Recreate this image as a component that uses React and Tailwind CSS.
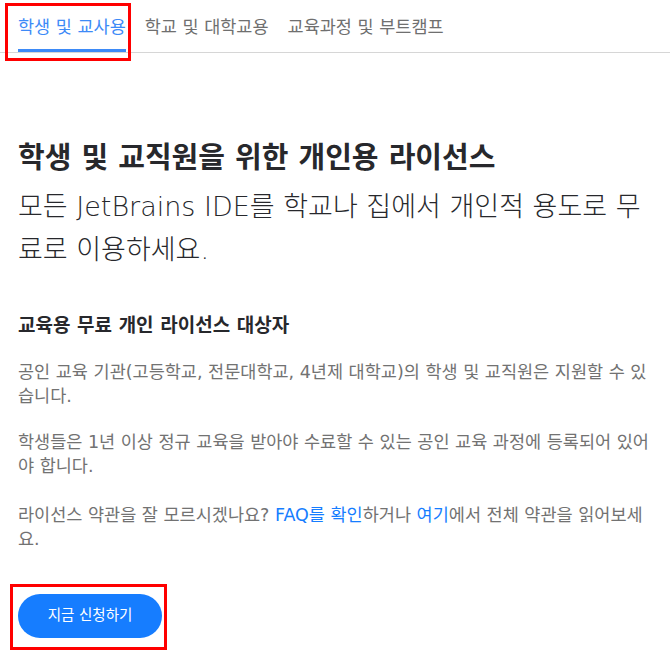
import { useState } from 'react'

const tabs = ['학생 및 교사용', '학교 및 대학교용', '교육과정 및 부트캠프']

function App() {
  const [active, setActive] = useState(0)

  return (
    <div className="relative w-[670px] min-h-[668px] bg-white font-['DejaVu_Sans','Noto_Sans_CJK_KR',sans-serif] text-[#27282c]">
      {/* Tabs */}
      <nav className="flex h-[53px] gap-[19px] border-b border-[#d6d6d6] pl-[18px]">
        {tabs.map((tab, i) => (
          <button
            key={tab}
            onClick={() => setActive(i)}
            className={
              i === active
                ? 'flex items-center border-b-[3px] border-[#3d8af7] pt-[5px] text-[17.5px] text-[#3d8af7]'
                : 'flex items-center border-b-[3px] border-transparent pt-[5px] text-[17.5px] text-[#6f6f6f]'
            }
          >
            {tab}
          </button>
        ))}
      </nav>

      <main className="pl-[18px] pr-[12px] pt-[88px]">
        <h1 className="text-[29px] font-bold leading-[34px]">학생 및 교직원을 위한 개인용 라이선스</h1>
        <p className="mt-[10px] text-[27px] font-light leading-[43px]">
          모든 JetBrains IDE를 학교나 집에서 개인적 용도로 무료로 이용하세요.
        </p>

        <h2 className="mt-[42px] text-[19px] font-bold leading-[24px]">교육용 무료 개인 라이선스 대상자</h2>
        <p className="mt-[23px] text-[17.5px] leading-[24px] text-[#727272]">
          공인 교육 기관(고등학교, 전문대학교, 4년제 대학교)의 학생 및 교직원은 지원할 수 있습니다.
        </p>
        <p className="mt-[22px] text-[17.5px] leading-[24px] text-[#727272]">
          학생들은 1년 이상 정규 교육을 받아야 수료할 수 있는 공인 교육 과정에 등록되어 있어야 합니다.
        </p>
        <p className="mt-[25px] text-[17.5px] leading-[24px] text-[#727272]">
          라이선스 약관을 잘 모르시겠나요? <a className="text-[#167dff]">FAQ를 확인</a>하거나{' '}
          <a className="text-[#167dff]">여기</a>에서 전체 약관을 읽어보세요.
        </p>

        <button className="mt-[43px] h-[44px] w-[144px] rounded-full bg-[#167dff] text-[14.5px] text-white">
          지금 신청하기
        </button>
      </main>

      {/* annotation boxes */}
      <div className="pointer-events-none absolute left-[5px] top-[3px] h-[58px] w-[126px] border-[3px] border-[#ff0000]" />
      <div className="pointer-events-none absolute left-[10px] top-[584px] h-[66px] w-[157px] border-[3px] border-[#ff0000]" />
    </div>
  )
}

export default App
